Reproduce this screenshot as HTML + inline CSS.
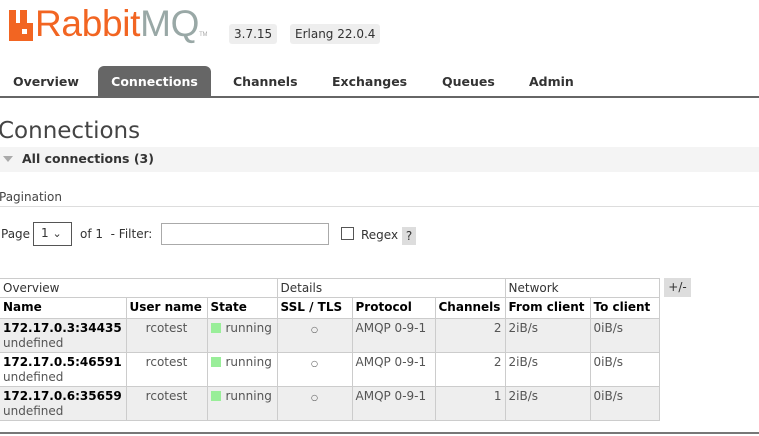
<!DOCTYPE html>
<html><head><style>
*{margin:0;padding:0;box-sizing:border-box}
body{width:759px;height:436px;overflow:hidden;background:#fff;font-family:"DejaVu Sans",Verdana,sans-serif;font-size:12px;color:#444;position:relative}
.a{position:absolute;white-space:nowrap}
.badge{background:#eee;border-radius:3px;font-size:12px;color:#333;padding:3px 5px}
.tab{position:absolute;top:66px;height:31px;line-height:31px;font-weight:bold;font-size:12.5px;color:#333}
table{position:absolute;left:0;top:278px;border-collapse:collapse;font-size:12px}
td,th{border:1px solid #ccc;padding:0 3px;vertical-align:top;text-align:left}
th{font-weight:bold;color:#000;height:21px;line-height:19px}
.g td{height:19px;line-height:18px;color:#333}
.r td{height:34px;line-height:15px;color:#555;padding-top:2px}
.r.s td{background:#eee}
.sq{display:inline-block;width:10px;height:10px;background:#99ee99;margin-right:5px;vertical-align:-1px}
.c{font-size:8px}
</style></head><body>
<svg class="a" style="left:9px;top:10px" width="24" height="31" viewBox="0 0 24 31"><path d="M0 0h7v13h4V0h7v13h6v18H0z M13 19v5h5v-5z" fill="#f26522" fill-rule="evenodd"/></svg>
<div class="a" style="left:35px;top:4px;line-height:40px;font-family:'Liberation Sans',sans-serif;font-size:37px;color:#f26522;letter-spacing:-0.3px">Rabbit<span style="color:#99a8a6">MQ</span><span style="font-size:6px;color:#aaa">TM</span></div>
<div class="a badge" style="left:229px;top:24px">3.7.15</div>
<div class="a badge" style="left:290px;top:24px">Erlang 22.0.4</div>
<div class="tab" style="left:13px">Overview</div>
<div class="tab" style="left:98px;width:113px;background:#666;color:#fff;border-radius:6px 6px 0 0;text-align:center">Connections</div>
<div class="tab" style="left:233px">Channels</div>
<div class="tab" style="left:332px">Exchanges</div>
<div class="tab" style="left:442px">Queues</div>
<div class="tab" style="left:529px">Admin</div>
<div class="a" style="left:0;top:96px;width:759px;height:2px;background:#666"></div>
<div class="a" style="left:-2px;top:118px;font-size:23px;color:#444">Connections</div>
<div class="a" style="left:0;top:147px;width:759px;height:25px;background:#f4f4f4"></div>
<div class="a" style="left:3px;top:156px;width:0;height:0;border-left:5px solid transparent;border-right:5px solid transparent;border-top:6px solid #aaa"></div>
<div class="a" style="left:22px;top:151px;font-weight:bold;font-size:12.5px;color:#333">All connections (3)</div>
<div class="a" style="left:-1px;top:190px">Pagination</div>
<div class="a" style="left:0;top:206px;width:759px;height:1px;background:#ddd"></div>
<div class="a" style="left:1px;top:227px;color:#333">Page</div>
<div class="a" style="left:33px;top:222px;width:39px;height:24px;border:1px solid #555;padding:3px 0 0 7px;color:#333">1 <span style="font-size:11px">&#8964;</span></div>
<div class="a" style="left:80px;top:227px;color:#333">of 1 &nbsp;- Filter:</div>
<div class="a" style="left:161px;top:223px;width:168px;height:22px;border:1px solid #aaa"></div>
<div class="a" style="left:341px;top:227px;width:13px;height:13px;border:1px solid #555"></div>
<div class="a" style="left:361px;top:228px;color:#333">Regex</div>
<div class="a" style="left:402px;top:227px;width:14px;height:18px;background:#ddd;text-align:center;line-height:18px;color:#333">?</div>
<table>
<tr class="g"><td colspan="3" style="border-left:0">Overview</td><td colspan="3">Details</td><td colspan="2">Network</td></tr>
<tr><th style="width:126px;border-left:0">Name</th><th style="width:81px">User name</th><th style="width:70px">State</th><th style="width:75px">SSL / TLS</th><th style="width:83px">Protocol</th><th style="width:70px">Channels</th><th style="width:85px">From client</th><th style="width:69px">To client</th></tr>
<tr class="r s"><td style="border-left:0"><b style="color:#000">172.17.0.3:34435</b><br>undefined</td><td style="text-align:center">rcotest</td><td><span class="sq"></span>running</td><td style="text-align:center"><span class="c">○</span></td><td>AMQP 0-9-1</td><td style="text-align:right">2</td><td>2iB/s</td><td>0iB/s</td></tr>
<tr class="r"><td style="border-left:0"><b style="color:#000">172.17.0.5:46591</b><br>undefined</td><td style="text-align:center">rcotest</td><td><span class="sq"></span>running</td><td style="text-align:center"><span class="c">○</span></td><td>AMQP 0-9-1</td><td style="text-align:right">2</td><td>2iB/s</td><td>0iB/s</td></tr>
<tr class="r s"><td style="border-left:0"><b style="color:#000">172.17.0.6:35659</b><br>undefined</td><td style="text-align:center">rcotest</td><td><span class="sq"></span>running</td><td style="text-align:center"><span class="c">○</span></td><td>AMQP 0-9-1</td><td style="text-align:right">1</td><td>2iB/s</td><td>0iB/s</td></tr>
</table>
<div class="a" style="left:664px;top:278px;width:27px;height:19px;background:#ddd;text-align:center;line-height:19px;color:#333">+/-</div>
<div class="a" style="left:0;top:432px;width:759px;height:2px;background:#777"></div>
</body></html>
